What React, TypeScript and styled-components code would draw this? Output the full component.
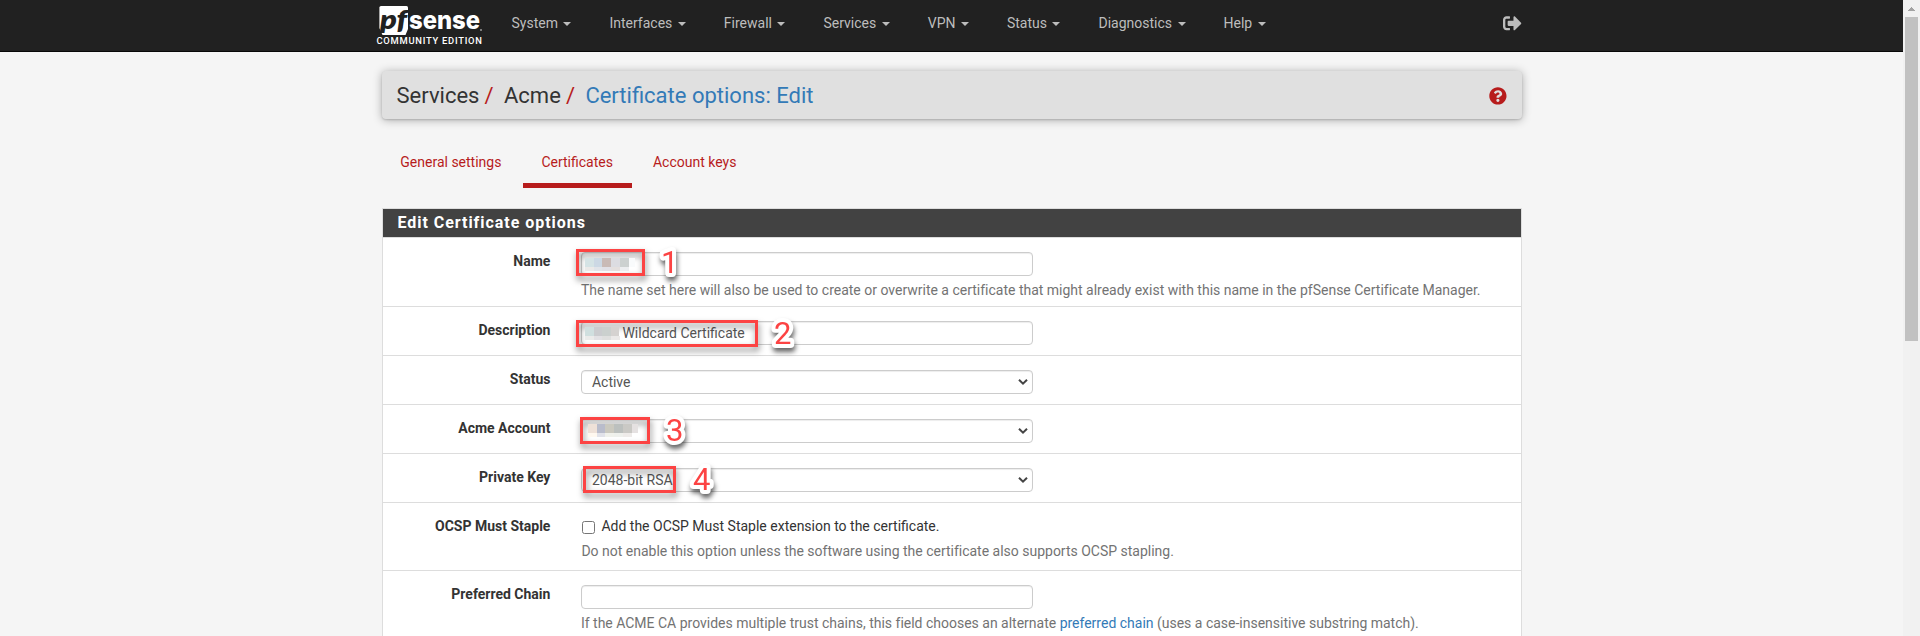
import React from "react";
import styled, { createGlobalStyle } from "styled-components";
import { FaQuestionCircle, FaSignOutAlt } from "react-icons/fa";

const GlobalStyle = createGlobalStyle`
  * { box-sizing: border-box; }
  body {
    margin: 0;
    overflow: hidden;
    background: #f5f5f5;
    color: #333;
    font: 400 14px/20px Roboto, "Liberation Sans", sans-serif;
  }
`;

const Screen = styled.div`
  display: flex;
  height: 636px;
  overflow: hidden;
`;

const Page = styled.div`
  flex: 1;
  min-width: 0;
  overflow: hidden;
`;

const Container = styled.div`
  width: 1140px;
  margin: 0 auto;
`;

const Navbar = styled.header`
  height: 52px;
  background: #212121;
  border-bottom: 1px solid #080808;
`;

const NavInner = styled(Container)`
  display: flex;
  align-items: flex-start;
`;

const Brand = styled.a`
  display: flex;
  flex-direction: column;
  width: 116px;
  margin-left: -5px;
  padding-top: 6px;
  color: #fff;
`;

const Edition = styled.span`
  margin-top: -2px;
  font-size: 9.4px;
  line-height: 12px;
  font-weight: 500;
  letter-spacing: 0.74px;
  white-space: nowrap;
`;

const Menu = styled.nav`
  display: flex;
  flex: 1;
`;

const MenuItem = styled.a`
  display: flex;
  align-items: center;
  gap: 5.5px;
  padding: 13px 19px;
  color: #bdbdbd;
`;

const Caret = styled.span`
  border-top: 4px solid currentColor;
  border-left: 4px solid transparent;
  border-right: 4px solid transparent;
  margin-top: 2px;
`;

const Logout = styled.a`
  display: flex;
  padding-top: 14px;
  color: #bdbdbd;
  font-size: 18.6px;
`;

const TitleBar = styled.div`
  display: flex;
  align-items: center;
  height: 48px;
  margin-top: 19px;
  padding: 1px 15px 0;
  background: #e0e0e0;
  border-radius: 4px;
  box-shadow: 0 1px 10px rgba(0, 0, 0, 0.3), 0 1px 2px rgba(0, 0, 0, 0.15);
  font-size: 22px;
  line-height: 24px;
`;

const Crumb = styled.span<{ $active?: boolean }>`
  color: ${(p) => (p.$active ? "#337ab7" : "#333")};
`;

const Slash = styled.span`
  margin: 0 10.3px 0 5.2px;
  color: #b71c1c;
`;

const Help = styled.a`
  display: flex;
  margin: 1px 0 0 auto;
  color: #b71c1c;
  font-size: 17.8px;
`;

const Tabs = styled.div`
  display: flex;
  gap: 2.4px;
  margin-top: 33px;
`;

const Tab = styled.a<{ $active?: boolean }>`
  height: 36px;
  padding: 0 18.8px;
  color: #b71c1c;
  border-bottom: 5px solid ${(p) => (p.$active ? "#b71c1c" : "transparent")};
`;

const Panel = styled.section`
  margin-top: 20px;
  background: #fff;
  border: 1px solid #ddd;
`;

const PanelTitle = styled.h2`
  height: 29px;
  margin: 0;
  padding-left: 15px;
  background: #424242;
  border-bottom: 1px solid #ddd;
  color: #fff;
  font-size: 16px;
  line-height: 28px;
  font-weight: 700;
  letter-spacing: 0.96px;
`;

const Row = styled.div<{ $height: number }>`
  display: flex;
  height: ${(p) => p.$height}px;
  border-bottom: 1px solid #ddd;
`;

const Label = styled.label`
  width: 168px;
  padding-top: 13px;
  text-align: right;
  font-weight: 700;
`;

const Field = styled.div`
  position: relative;
  width: 940px;
  margin-left: 30.5px;
  padding-top: 14px;
`;

const Control = styled.div<{ $select?: boolean }>`
  display: flex;
  align-items: center;
  justify-content: space-between;
  width: 452px;
  height: 24px;
  padding: 0 ${(p) => (p.$select ? "4px 0 10px" : "9px")};
  border: 1px solid #ccc;
  border-radius: 4px;
  box-shadow: inset 0 1px 1px rgba(0, 0, 0, 0.075);
  color: #555;
`;

const InputText = styled.span`
  margin-left: 31.5px;
`;

const HelpText = styled.p<{ $gap?: number; $indent?: number }>`
  margin: ${(p) => p.$gap ?? 4}px 0 0 ${(p) => p.$indent ?? 0}px;
  color: #737373;
  letter-spacing: -0.006px;
  white-space: nowrap;
`;

const Link = styled.a`
  color: #337ab7;
`;

const CheckLine = styled.div`
  display: flex;
  align-items: center;
  gap: 6.5px;
  margin: -1px 0 0 1px;
`;

const CheckBox = styled.span`
  width: 13px;
  height: 13px;
  margin-top: 2px;
  border: 1px solid #767676;
  border-radius: 2.5px;
`;

const Highlight = styled.div<{ $x: number; $y: number; $w: number }>`
  position: absolute;
  left: ${(p) => p.$x}px;
  top: ${(p) => p.$y}px;
  width: ${(p) => p.$w}px;
  height: 27px;
  border: 3px solid #fc4343;
  filter: drop-shadow(1px 4px 3px rgba(0, 0, 0, 0.5));
`;

const StepSvg = styled.svg<{ $x: number; $y: number }>`
  position: absolute;
  left: ${(p) => p.$x}px;
  top: ${(p) => p.$y}px;
  overflow: visible;
  filter: drop-shadow(1px 4px 2.5px rgba(0, 0, 0, 0.6));
`;

const StepOutline = styled.text`
  fill: #fc4343;
  stroke: #fff;
  stroke-width: 8px;
  stroke-linejoin: round;
  paint-order: stroke;
  font-size: 31px;
  font-weight: 400;
`;

const Mosaic = styled.div<{ $x: number; $y: number }>`
  position: absolute;
  left: ${(p) => p.$x}px;
  top: ${(p) => p.$y}px;
`;

const MosaicRow = styled.div<{ $height: number }>`
  display: flex;
  height: ${(p) => p.$height}px;
`;

const Cell = styled.i<{ $color: string; $width?: number }>`
  width: ${(p) => p.$width ?? 8.75}px;
  background: ${(p) => p.$color};
`;

const ScrollTrack = styled.aside`
  display: flex;
  flex-direction: column;
  align-items: center;
  width: 17px;
  padding-top: 7px;
  background: #f1f1f1;
`;

const ScrollThumb = styled.div`
  width: 13px;
  height: 324px;
  margin-top: 6px;
  background: #c1c1c1;
`;

const LogoSvg = styled.svg`
  overflow: visible;
`;

const Logo = () => (
  <LogoSvg width="106" height="31" viewBox="0 0 106 31">
    <path d="M4 0H29.5Q31 0 31 1.500V23L28.500 29H5.500L2.400 22V1.600Q2.400 0 4 0Z" fill="#fff" />
    <text x="3" y="22.800" fontFamily="Lato, sans-serif" fontWeight="800" fontStyle="italic" fontSize="27" textLength="27" lengthAdjust="spacingAndGlyphs" fill="#212121">pf</text>
    <text x="32" y="23.300" fontFamily="Inter, sans-serif" fontWeight="800" fontSize="25" textLength="71" lengthAdjust="spacingAndGlyphs" fill="#fff">sense</text>
    <circle cx="104" cy="24" r="1" fill="#999" />
  </LogoSvg>
);

const Chevron = () => (
  <svg width="10" height="8" viewBox="0 0 10 8">
    <path d="M1 1.700 5 5.700 9 1.700" fill="none" stroke="#444" strokeWidth="2" />
  </svg>
);

const UpArrow = () => (
  <svg width="7" height="4" viewBox="0 0 7 4" shapeRendering="crispEdges">
    <path d="M3 0h1v1h1v1h1v1h1v1H0V3h1V2h1V1h1z" fill="#a3a3a3" />
  </svg>
);

const Step = ({ x, y, children }: { x: number; y: number; children: string }) => (
  <StepSvg $x={x} $y={y} width="18" height="30">
    <StepOutline x="0" y="27">{children}</StepOutline>
  </StepSvg>
);

const Censored = ({ x, y, top, bottom, last }: { x: number; y: number; top: string[]; bottom: string[]; last?: number }) => (
  <Mosaic $x={x} $y={y}>
    <MosaicRow $height={9}>
      {top.map((c, i) => <Cell key={i} $color={c} $width={i === top.length - 1 ? last : undefined} />)}
    </MosaicRow>
    <MosaicRow $height={4}>
      {bottom.map((c, i) => <Cell key={i} $color={c} />)}
    </MosaicRow>
  </Mosaic>
);

const menu = ["System", "Interfaces", "Firewall", "Services", "VPN", "Status", "Diagnostics", "Help"];

export default function App() {
  return (
    <Screen>
      <GlobalStyle />
      <Page>
        <Navbar>
          <NavInner>
            <Brand>
              <Logo />
              <Edition>COMMUNITY EDITION</Edition>
            </Brand>
            <Menu>
              {menu.map((m) => <MenuItem key={m}>{m}<Caret /></MenuItem>)}
            </Menu>
            <Logout><FaSignOutAlt /></Logout>
          </NavInner>
        </Navbar>
        <Container>
          <TitleBar>
            <Crumb>Services</Crumb><Slash>/</Slash>
            <Crumb>Acme</Crumb><Slash>/</Slash>
            <Crumb $active>Certificate options: Edit</Crumb>
            <Help><FaQuestionCircle /></Help>
          </TitleBar>
          <Tabs>
            <Tab>General settings</Tab>
            <Tab $active>Certificates</Tab>
            <Tab>Account keys</Tab>
          </Tabs>
          <Panel>
            <PanelTitle>Edit Certificate options</PanelTitle>
            <Row $height={69}>
              <Label>Name</Label>
              <Field>
                <Control />
                <HelpText>The name set here will also be used to create or overwrite a certificate that might already exist with this name in the pfSense Certificate Manager.</HelpText>
                <Highlight $x={-5} $y={11} $w={69} />
                <Censored x={4} y={20} last={6} top={["#d5e3e5", "#ccd8e4", "#c9bab6", "#dcdce1", "#ccd1d0", "#f9fbfc"]} bottom={["#ebe9e8", "#e1e4e9", "#e1e0e6", "#e4dfde", "#eceef0"]} />
                <Step x={80.5} y={8.3}>1</Step>
              </Field>
            </Row>
            <Row $height={49}>
              <Label>Description</Label>
              <Field>
                <Control><InputText>Wildcard Certificate</InputText></Control>
                <Highlight $x={-5} $y={13} $w={182} />
                <Censored x={4} y={20} last={8} top={["#d0dfdf", "#cbcccf", "#cbd0ce", "#d5d2d0"]} bottom={["#ebebea", "#e2e1e4", "#dfdfde", "#ebe9e8"]} />
                <Step x={193.5} y={10.3}>2</Step>
              </Field>
            </Row>
            <Row $height={49}>
              <Label>Status</Label>
              <Field><Control $select>Active<Chevron /></Control></Field>
            </Row>
            <Row $height={49}>
              <Label>Acme Account</Label>
              <Field>
                <Control $select><span /><Chevron /></Control>
                <Highlight $x={-1} $y={12} $w={70} />
                <Censored x={7} y={19} last={6} top={["#eee1d8", "#b9bccb", "#cbc9bf", "#bcc0be", "#cac9c5", "#e5e1e1"]} bottom={["#fff8ef", "#e1e2e9", "#f0f1eb", "#eef0ec", "#eeebe9"]} />
                <Step x={85.3} y={9}>3</Step>
              </Field>
            </Row>
            <Row $height={49}>
              <Label>Private Key</Label>
              <Field>
                <Control $select>2048-bit RSA<Chevron /></Control>
                <Highlight $x={2} $y={12} $w={93} />
                <Step x={112.3} y={9}>4</Step>
              </Field>
            </Row>
            <Row $height={68}>
              <Label>OCSP Must Staple</Label>
              <Field>
                <CheckLine><CheckBox />Add the OCSP Must Staple extension to the certificate.</CheckLine>
                <HelpText $gap={5} $indent={0.5}>Do not enable this option unless the software using the certificate also supports OCSP stapling.</HelpText>
              </Field>
            </Row>
            <Row $height={69}>
              <Label>Preferred Chain</Label>
              <Field>
                <Control />
                <HelpText>If the ACME CA provides multiple trust chains, this field chooses an alternate <Link>preferred chain</Link> (uses a case-insensitive substring match).</HelpText>
              </Field>
            </Row>
          </Panel>
        </Container>
      </Page>
      <ScrollTrack><UpArrow /><ScrollThumb /></ScrollTrack>
    </Screen>
  );
}
